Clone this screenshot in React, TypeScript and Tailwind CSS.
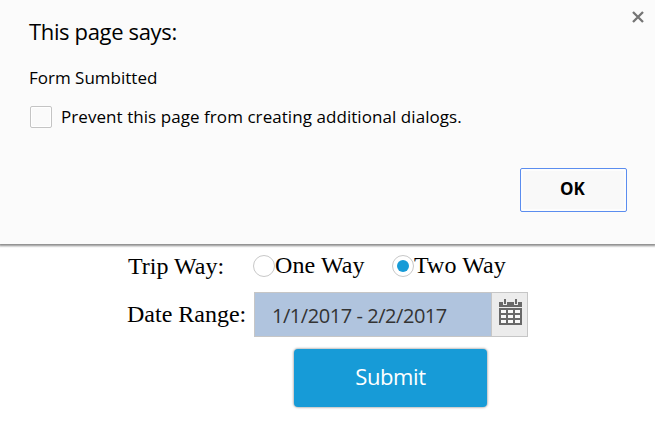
import React from "react";

function CloseIcon() {
  return (
    <svg width="12" height="12" viewBox="0 0 12 12" aria-hidden="true">
      <path d="M1 1 11 11M11 1 1 11" stroke="#757575" strokeWidth="2.3" fill="none" />
    </svg>
  );
}

function CalendarIcon() {
  return (
    <svg width="23" height="26" viewBox="0 0 23 26" shapeRendering="crispEdges" aria-hidden="true">
      <path d="M0 3h23v5H0z" fill="#686868" />
      <path d="M4 0h4v6H4zM15 0h4v6h-4z" fill="#ececec" />
      <path d="M5 0h2v5H5zM16 0h2v5h-2z" fill="#686868" />
      <path d="M0 9h23v17H0z" fill="#686868" />
      <path
        d="M2 11h5v3H2zM9 11h5v3H9zM16 11h5v3h-5zM2 16h5v3H2zM9 16h5v3H9zM16 16h5v3h-5zM2 21h5v3H2zM9 21h5v3H9zM16 21h5v3h-5z"
        fill="#f8f8f8"
      />
    </svg>
  );
}

function Radio({ checked }: { checked?: boolean }) {
  return (
    <span className="flex size-[22px] shrink-0 items-center justify-center rounded-full border border-[#c8c8c8] bg-white">
      {checked && <span className="size-[12px] rounded-full bg-[#179bd7]" />}
    </span>
  );
}

function Dialog() {
  return (
    <section className="flex h-[244px] flex-col bg-[#fbfbfb] pl-[29px] pr-[28px] font-['Open_Sans',sans-serif] text-black shadow-[0_1px_2px_1px_rgba(0,0,0,0.45)]">
      <header className="flex h-[48px] justify-between">
        <h1 className="pt-[16px] text-[22px] leading-[30px] tracking-[-0.35px] whitespace-nowrap">This page says:</h1>
        <button className="-mr-[17px] mt-[11px] size-[12px]" aria-label="Close">
          <CloseIcon />
        </button>
      </header>
      <p className="mt-[18px] text-[17px] leading-[24px] whitespace-nowrap">Form Sumbitted</p>
      <label className="mt-[15px] flex h-[24px] items-center">
        <span className="ml-px size-[22px] rounded-[2px] border border-[#c4c4c4] bg-[#fafafa] shadow-[inset_0_0_0_1px_#fff]" />
        <span className="ml-[9px] text-[17px] leading-[24px] tracking-[0.06px] whitespace-nowrap">
          Prevent this page from creating additional dialogs.
        </span>
      </label>
      <button className="mt-[39px] flex h-[44px] w-[107px] items-center justify-center self-end rounded-[2px] border border-[#5b8def] bg-[#f9f9f9] pb-[2px] pr-[2px] text-[17px] font-bold tracking-[0.1px] shadow-[inset_0_0_0_2px_#fdfdfd]">
        OK
      </button>
    </section>
  );
}

export default function App() {
  return (
    <main className="h-[435px] w-[655px] overflow-hidden bg-white">
      <Dialog />
      <form className="flex flex-col pt-[9px] font-['Liberation_Serif',serif] text-[24px] leading-[26px] text-black">
        <div className="flex h-[26px] items-center pl-[128px] whitespace-nowrap">
          <span className="w-[125px]">Trip Way:</span>
          <span className="flex w-[139px] items-center">
            <Radio />
            <span className="pb-[2px] tracking-[0.1px]">One Way</span>
          </span>
          <span className="flex items-center">
            <Radio checked />
            <span className="pb-[2px] tracking-[0.1px]">Two Way</span>
          </span>
        </div>
        <div className="mt-[13px] flex h-[45px] items-center pl-[127px] whitespace-nowrap">
          <span className="w-[127px] pb-[2px]">Date Range:</span>
          <div className="flex h-[45px] w-[274px] border border-[#c6c6c6] font-['Open_Sans',sans-serif]">
            <span className="flex flex-1 items-center bg-[#b0c4de] pl-[17px] pt-[2px] text-[20px] tracking-[-0.45px] text-[#333333]">1/1/2017 - 2/2/2017</span>
            <span className="flex w-[36px] border-l border-[#c6c6c6] bg-[#ececec] pl-[7px] pt-[6px]">
              <CalendarIcon />
            </span>
          </div>
        </div>
        <button className="ml-[294px] mt-[12px] flex h-[58px] w-[193px] items-center justify-center rounded-[4px] bg-[#179bd7] pb-[4px] font-['Open_Sans',sans-serif] text-[22px] tracking-[-0.4px] text-white shadow-[0_0_2px_1px_rgba(0,0,0,0.25)]">
          Submit
        </button>
      </form>
    </main>
  );
}
